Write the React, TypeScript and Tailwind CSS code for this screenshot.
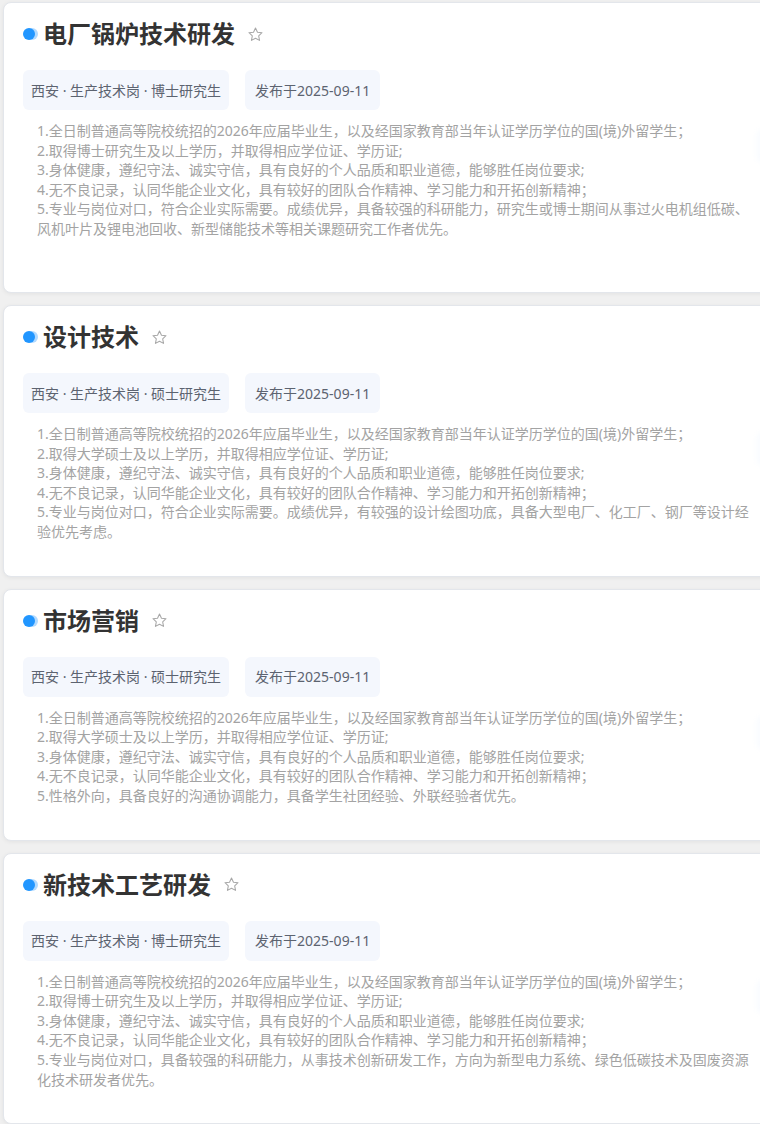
import React from "react";

type Job = {
  title: string;
  degree: string;
  date: string;
  lines: string[];
  tall?: boolean;
};

const first = "1.全日制普通高等院校统招的2026年应届毕业生，以及经国家教育部当年认证学历学位的国(境)外留学生；";
const phd = "2.取得博士研究生及以上学历，并取得相应学位证、学历证;";
const master = "2.取得大学硕士及以上学历，并取得相应学位证、学历证;";
const common = [
  "3.身体健康，遵纪守法、诚实守信，具有良好的个人品质和职业道德，能够胜任岗位要求;",
  "4.无不良记录，认同华能企业文化，具有较好的团队合作精神、学习能力和开拓创新精神；",
];

// each entry is one visual line (line 5 wraps the same way as the original page)
const jobs: Job[] = [
  {
    title: "电厂锅炉技术研发",
    degree: "博士研究生",
    date: "2025-09-11",
    tall: true,
    lines: [
      first,
      phd,
      ...common,
      "5.专业与岗位对口，符合企业实际需要。成绩优异，具备较强的科研能力，研究生或博士期间从事过火电机组低碳、",
      "风机叶片及锂电池回收、新型储能技术等相关课题研究工作者优先。",
    ],
  },
  {
    title: "设计技术",
    degree: "硕士研究生",
    date: "2025-09-11",
    lines: [
      first,
      master,
      ...common,
      "5.专业与岗位对口，符合企业实际需要。成绩优异，有较强的设计绘图功底，具备大型电厂、化工厂、钢厂等设计经",
      "验优先考虑。",
    ],
  },
  {
    title: "市场营销",
    degree: "硕士研究生",
    date: "2025-09-11",
    lines: [first, master, ...common, "5.性格外向，具备良好的沟通协调能力，具备学生社团经验、外联经验者优先。"],
  },
  {
    title: "新技术工艺研发",
    degree: "博士研究生",
    date: "2025-09-11",
    lines: [
      first,
      phd,
      ...common,
      "5.专业与岗位对口，具备较强的科研能力，从事技术创新研发工作，方向为新型电力系统、绿色低碳技术及固废资源",
      "化技术研发者优先。",
    ],
  },
];

const Star = () => (
  <svg width="17" height="17" viewBox="0 0 24 24" fill="none" stroke="#a8a8a8" strokeWidth="1.5" strokeLinejoin="round">
    <path d="M12 2.8l2.8 5.9 6.4.8-4.7 4.4 1.2 6.4L12 17.2l-5.7 3.1 1.2-6.4-4.7-4.4 6.4-.8z" />
  </svg>
);

const JobCard = ({ job }: { job: Job }) => {
  return (
    <div
      className={`w-[820px] mb-3 bg-white border border-[#e3e6eb] rounded-lg shadow-[0_1px_4px_rgba(0,0,0,0.06)] pl-[19px] pt-[15px] pb-[34px] ${
        job.tall ? "min-h-[291px]" : ""
      }`}
    >
      {/* Title */}
      <div className="flex items-center h-8">
        <span className="w-3 h-3 rounded-full bg-[#2196ff] shadow-[3px_0_0_rgba(33,150,255,0.35)] mr-2" />
        <h2 className="text-[24px] leading-8 font-bold text-[#333333]">{job.title}</h2>
        <span className="ml-3 flex items-center">
          <Star />
        </span>
      </div>

      {/* Tags */}
      <div className="flex items-center gap-4 mt-[20px]">
        <div className="h-10 px-2 flex items-center rounded-md bg-[#f4f7fd] text-[14px] text-[#5c6370]">
          西安 · 生产技术岗 · {job.degree}
        </div>
        <div className="h-10 px-[10px] flex items-center rounded-md bg-[#f4f7fd] text-[14px] text-[#5c6370]">
          发布于{job.date}
        </div>
      </div>

      {/* Requirements */}
      <div className="flex items-start mt-[11px]">
        <div className="shrink-0 w-[716px] pl-[14px] box-content text-[14px] leading-[19.6px] text-[#a3a3a3] [text-spacing-trim:space-all]">
          {job.lines.map((r, i) => (
            <p key={i} className="whitespace-nowrap">
              {r}
            </p>
          ))}
        </div>
        <div className="shrink-0 ml-[3px] mt-[8px] w-[90px] h-[34px] rounded-md bg-gradient-to-r from-[#fafcff] to-[#eef4ff] blur-[2px]" />
      </div>
    </div>
  );
};

export default function App() {
  return (
    <div
      className="w-[760px] h-[1124px] overflow-hidden bg-[#f0f0f0] pt-[2px] pl-[3px]"
      style={{ fontFamily: '"Noto Sans", "Noto Sans CJK SC", sans-serif' }}
    >
      {jobs.map((job) => (
        <JobCard key={job.title} job={job} />
      ))}
    </div>
  );
}
